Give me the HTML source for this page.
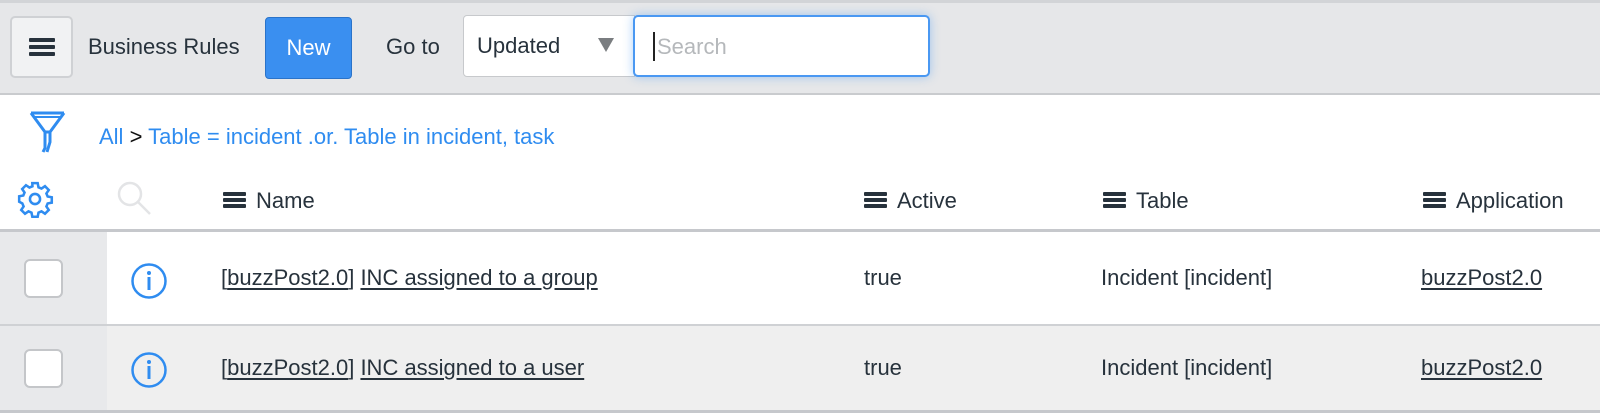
<!DOCTYPE html>
<html><head><style>
*{box-sizing:border-box;margin:0;padding:0}
body{width:1600px;height:415px;overflow:hidden;background:#fff;font-family:"Liberation Sans",sans-serif;color:#27323c;position:relative}
.abs{position:absolute}
.top{left:0;top:0;width:1600px;height:95px;background:#e6e7e9;border-top:3px solid #d2d4d7;border-bottom:2px solid #c9cbce}
.btn{left:10px;top:16px;width:63px;height:62px;border:2px solid #cfd1d4;border-radius:5px;background:#f1f2f3}
.ham{display:inline-block;width:26px}
.ham i{display:block;height:4px;background:#27323c;border-radius:1px;margin-bottom:3px}
.hs{width:23px}
.hs i{height:4px;margin-bottom:2px}
.t{font-size:22px;white-space:nowrap}
.new{left:265px;top:17px;width:87px;height:62px;background:#3a8ff0;border:1px solid #2a73c9;border-radius:4px;color:#fff;text-align:center;line-height:60px;font-size:22px}
.sel{left:463px;top:15px;width:172px;height:62px;background:#fff;border:1px solid #c7c9cc;border-radius:4px 0 0 4px}
.srch{left:633px;top:15px;width:297px;height:62px;background:#fff;border:2px solid #4a98f2;border-radius:5px;box-shadow:0 0 10px rgba(74,152,242,.45)}
.blue{color:#2f8cf0}
.row{left:0;width:1600px}
.cb{width:39px;height:39px;border:2px solid #c4c6c9;border-radius:6px;background:#fff}
.ln{text-decoration:underline;text-underline-offset:3px}
</style></head><body>
<div class="abs top"></div>
<div class="abs btn"><div class="ham" style="position:absolute;left:17px;top:20px"><i></i><i></i><i></i></div></div>
<div class="abs t" style="left:88px;top:34px">Business Rules</div>
<div class="abs new">New</div>
<div class="abs t" style="left:386px;top:34px">Go to</div>
<div class="abs sel"><span class="abs t" style="left:13px;top:17px">Updated</span><span class="abs" style="left:134px;top:22px;width:0;height:0;border-left:8px solid transparent;border-right:8px solid transparent;border-top:14px solid #7a7d80"></span></div>
<div class="abs srch"><span class="abs" style="left:18px;top:15px;width:2px;height:29px;background:#222"></span><span class="abs t" style="left:22px;top:17px;color:#b5b8bb">Search</span></div>

<svg class="abs" style="left:28px;top:110px" width="40" height="44" viewBox="0 0 40 44" fill="none" stroke="#2f8cf0" stroke-width="3"><path d="M3 3h33M3 3l14 19h5l14-19"/><path d="M6 7h27" stroke-width="2"/><path d="M17 22v16l-2 4M22 22v10l-3 10"/></svg>
<div class="abs t" style="left:99px;top:124px"><span class="blue">All</span> <span style="color:#111">&gt;</span> <span class="blue">Table = incident .or. Table in incident, task</span></div>

<svg class="abs" style="left:16px;top:180px" width="38" height="38" viewBox="0 0 24 24" fill="none" stroke="#2f8cf0" stroke-width="1.6"><circle cx="12" cy="12" r="3.2"/><path d="M10.3 2h3.4l.5 2.6 1.9.8 2.2-1.5 2.4 2.4-1.5 2.2.8 1.9 2.6.5v3.4l-2.6.5-.8 1.9 1.5 2.2-2.4 2.4-2.2-1.5-1.9.8-.5 2.6h-3.4l-.5-2.6-1.9-.8-2.2 1.5-2.4-2.4 1.5-2.2-.8-1.9L2 13.7v-3.4l2.6-.5.8-1.9-1.5-2.2 2.4-2.4 2.2 1.5 1.9-.8z"/></svg>
<svg class="abs" style="left:116px;top:180px" width="38" height="38" viewBox="0 0 38 38" fill="none" stroke="#e3e4e6" stroke-width="2.5"><circle cx="14" cy="14" r="11"/><path d="M22 22l12 12"/></svg>

<div class="abs" style="left:223px;top:192px"><div class="ham hs"><i></i><i></i><i></i></div></div>
<div class="abs t" style="left:256px;top:188px">Name</div>
<div class="abs" style="left:864px;top:192px"><div class="ham hs"><i></i><i></i><i></i></div></div>
<div class="abs t" style="left:897px;top:188px">Active</div>
<div class="abs" style="left:1103px;top:192px"><div class="ham hs"><i></i><i></i><i></i></div></div>
<div class="abs t" style="left:1136px;top:188px">Table</div>
<div class="abs" style="left:1423px;top:192px"><div class="ham hs"><i></i><i></i><i></i></div></div>
<div class="abs t" style="left:1456px;top:188px">Application</div>

<div class="abs row" style="top:229px;height:3px;background:#c6c8cc"></div>
<div class="abs row" style="top:232px;height:92px;background:#fff"></div>
<div class="abs" style="left:0;top:232px;width:107px;height:92px;background:#e8e9eb"></div>
<div class="abs row" style="top:324px;height:2px;background:#cfd1d4"></div>
<div class="abs row" style="top:326px;height:85px;background:#efefef"></div>
<div class="abs" style="left:0;top:326px;width:107px;height:85px;background:#e8e9eb"></div>
<div class="abs row" style="top:410px;height:3px;background:#c6c8cc"></div>

<div class="abs cb" style="left:24px;top:259px"></div>
<div class="abs cb" style="left:24px;top:349px"></div>
<svg class="abs" style="left:130px;top:262px" width="38" height="38" viewBox="0 0 38 38"><circle cx="19" cy="19" r="16.5" fill="none" stroke="#2f8cf0" stroke-width="2.5"/><circle cx="19" cy="11" r="2" fill="#2f8cf0"/><rect x="17.5" y="15" width="3" height="13" fill="#2f8cf0"/></svg>
<svg class="abs" style="left:130px;top:351px" width="38" height="38" viewBox="0 0 38 38"><circle cx="19" cy="19" r="16.5" fill="none" stroke="#2f8cf0" stroke-width="2.5"/><circle cx="19" cy="11" r="2" fill="#2f8cf0"/><rect x="17.5" y="15" width="3" height="13" fill="#2f8cf0"/></svg>

<div class="abs t" style="left:221px;top:265px">[<span class="ln">buzzPost2.0</span>] <span class="ln">INC assigned to a group</span></div>
<div class="abs t" style="left:864px;top:265px">true</div>
<div class="abs t" style="left:1101px;top:265px">Incident [incident]</div>
<div class="abs t ln" style="left:1421px;top:265px">buzzPost2.0</div>

<div class="abs t" style="left:221px;top:355px">[<span class="ln">buzzPost2.0</span>] <span class="ln">INC assigned to a user</span></div>
<div class="abs t" style="left:864px;top:355px">true</div>
<div class="abs t" style="left:1101px;top:355px">Incident [incident]</div>
<div class="abs t ln" style="left:1421px;top:355px">buzzPost2.0</div>
</body></html>
